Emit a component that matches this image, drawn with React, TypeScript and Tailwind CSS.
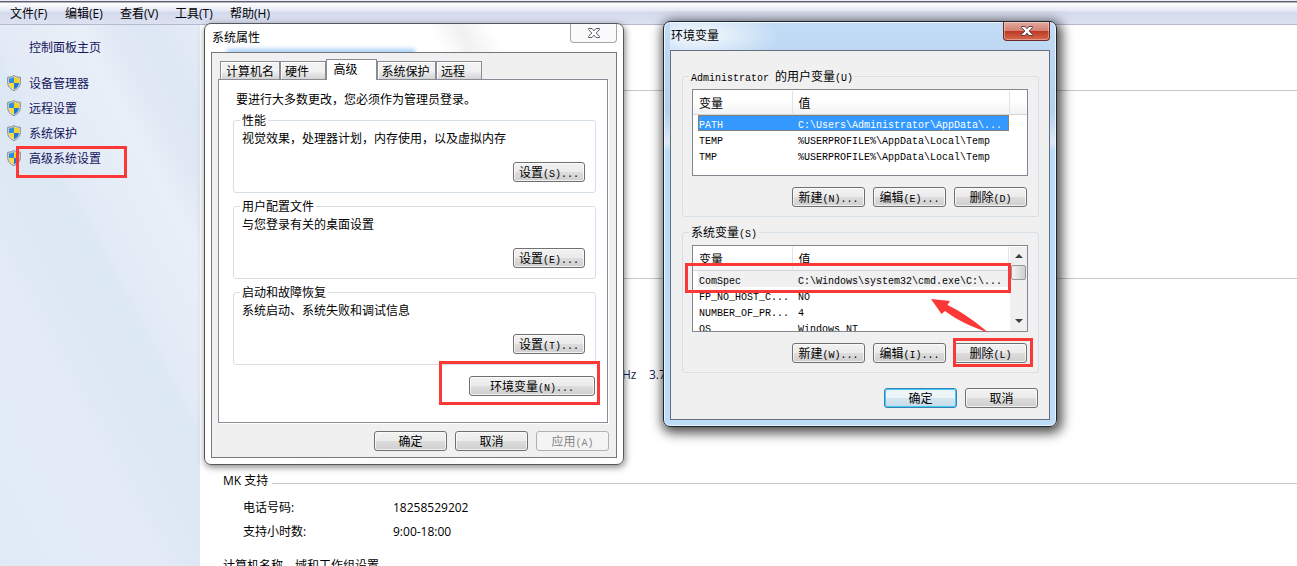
import type { ReactNode } from "react";
import clsx from "clsx";

const MENU_ITEMS = ["文件(F)", "编辑(E)", "查看(V)", "工具(T)", "帮助(H)"];

const SIDE_LINKS = ["设备管理器", "远程设置", "系统保护", "高级系统设置"];

const TABS = [
  { label: "计算机名", width: "w-[60px]" },
  { label: "硬件", width: "w-[46px]" },
  { label: "高级", width: "w-[51px]" },
  { label: "系统保护", width: "w-[59px]" },
  { label: "远程", width: "w-[46px]" },
];

const ADVANCED_GROUPS = [
  { title: "性能", text: "视觉效果，处理器计划，内存使用，以及虚拟内存", button: "设置(S)..." },
  { title: "用户配置文件", text: "与您登录有关的桌面设置", button: "设置(E)..." },
  { title: "启动和故障恢复", text: "系统启动、系统失败和调试信息", button: "设置(T)..." },
];

const USER_VARS = [
  { name: "PATH", value: "C:\\Users\\Administrator\\AppData\\..." },
  { name: "TEMP", value: "%USERPROFILE%\\AppData\\Local\\Temp" },
  { name: "TMP", value: "%USERPROFILE%\\AppData\\Local\\Temp" },
];

const SYSTEM_VARS = [
  { name: "ComSpec", value: "C:\\Windows\\system32\\cmd.exe\\C:\\..." },
  { name: "FP_NO_HOST_C...", value: "NO" },
  { name: "NUMBER_OF_PR...", value: "4" },
  { name: "OS", value: "Windows_NT" },
];

export default function App() {
  return (
    <div className="relative flex h-screen flex-col overflow-hidden bg-white font-['Open_Sans','Noto_Sans_CJK_SC',sans-serif] text-[12px] leading-[18px] text-black">
      <MenuBar />
      <div className="flex min-h-0 flex-1">
        <Sidebar />
        <SystemInfo />
      </div>
      <SystemPropertiesDialog />
      <EnvironmentDialog />
    </div>
  );
}

function MenuBar() {
  return (
    <nav className="flex h-[25px] shrink-0 items-center gap-[10px] border-b border-[#b4b9ce] bg-[linear-gradient(180deg,#eceaf3_0,#eceaf3_1px,#5f6274_1px,#5f6274_2px,#ffffff_3px,#e4e8f4_11px,#d4daed_12px,#dde2f2_100%)] pt-[3px] pl-[10px]">
      {MENU_ITEMS.map((item) => (
        <button key={item} className="w-[45px] text-left whitespace-nowrap">
          {item}
        </button>
      ))}
    </nav>
  );
}

function Sidebar() {
  return (
    <aside className="w-[200px] shrink-0 bg-[linear-gradient(62deg,#e0eaf6_0%,#e3ebf8_25%,#e3ebf7_33%,#dfe8f5_38%,#dde8f5_54%,#e4ebf6_59%,#e9eff8_75%,#e0e8f4_82%,#dde7f4_90%,#e5ecf6_100%)] pt-[14px] text-[#15155c]">
      <a href="#home" className="ml-[29px] block">
        控制面板主页
      </a>
      <ul className="mt-[18px] space-y-[7px]">
        {SIDE_LINKS.map((link) => (
          <li key={link} className="relative flex items-start pl-[7px]">
            <Shield />
            <a href="#settings" className="ml-2">
              {link}
            </a>
            {link === "高级系统设置" && (
              <Highlight className="-top-1 left-4 h-8 w-[111px]" />
            )}
          </li>
        ))}
      </ul>
    </aside>
  );
}

function SystemInfo() {
  return (
    <main className="min-w-0 flex-1 pl-[23px]">
      <div className="h-[66px] border-b border-[#c8c8c8]" />
      <div className="h-[188px] border-b border-[#c8c8c8]" />
      <p className="mt-[87px] ml-[399px] whitespace-pre text-[#1c1c50]">Hz    3.7</p>
      <div className="mt-[88px] flex items-center">
        <h2>MK 支持</h2>
        <hr className="mt-[5px] ml-1 flex-1 border-[#c8c8c8]" />
      </div>
      <dl className="mt-[9px] grid grid-cols-[150px_1fr] gap-y-[6px] pl-5">
        <dt>电话号码:</dt>
        <dd>18258529202</dd>
        <dt>支持小时数:</dt>
        <dd>9:00-18:00</dd>
      </dl>
      <h2 className="mt-4">计算机名称、域和工作组设置</h2>
    </main>
  );
}

function SystemPropertiesDialog() {
  return (
    <section
      aria-label="系统属性"
      className="absolute top-[23px] left-[204px] w-[420px] rounded-[7px] border border-[#55585c] bg-linear-to-r from-white via-[#fafafa] to-white px-[6px] pb-[6px] shadow-[1px_2px_7px_rgba(0,0,0,0.5)]"
    >
      <header className="relative flex h-7 items-start justify-between overflow-hidden bg-[linear-gradient(62deg,#fff_55%,#f1f1f1_62%,#fff_70%)]">
        <div className="absolute -bottom-[3px] left-4 h-[6px] w-[188px] bg-[#a4cef8] blur-[2px]" />
        <h1 className="relative mt-[5px] ml-[1px]">系统属性</h1>
        <button
          aria-label="关闭"
          className="flex h-[19px] w-[47px] items-center justify-center rounded-b-[4px] border border-t-0 border-[#a3a7ab] bg-[#fafafa]"
        >
          <CloseGlyph outline="#5b6070" />
        </button>
      </header>
      <div className="border border-[#75787c] bg-[#f0f0f0] p-[6px] pr-[7px] font-['Noto_Sans_CJK_SC',sans-serif] leading-4">
        <div role="tablist" className="flex h-5 items-end pl-[2px]">
          {TABS.map((tab) => (
            <Tab key={tab.label} label={tab.label} width={tab.width} active={tab.label === "高级"} />
          ))}
        </div>
        <div
          role="tabpanel"
          className="mr-px border border-[#898c95] bg-white pt-[11px] pr-[11px] pb-[26px] pl-[14px] shadow-[1px_1px_0_#fff]"
        >
          <p className="pl-[3px]">要进行大多数更改，您必须作为管理员登录。</p>
          <div className="mt-[5px] space-y-[5px]">
            {ADVANCED_GROUPS.map((group) => (
              <GroupBox key={group.title} title={group.title}>
                <p className="pt-[2px]">{group.text}</p>
                <div className="mt-4 mb-px flex justify-end">
                  <PushButton label={group.button} width="w-[72px]" />
                </div>
              </GroupBox>
            ))}
          </div>
          <div className="mt-[11px] flex justify-end pr-px">
            <div className="relative">
              <PushButton label="环境变量(N)..." width="w-[126px]" />
              <Highlight className="-top-[15px] -left-[30px] h-11 w-[161px]" />
            </div>
          </div>
        </div>
        <div className="mt-2 flex justify-end gap-2">
          <PushButton label="确定" />
          <PushButton label="取消" />
          <PushButton label="应用(A)" disabled />
        </div>
      </div>
    </section>
  );
}

function EnvironmentDialog() {
  return (
    <section
      aria-label="环境变量"
      className="absolute top-[21px] left-[663px] w-[394px] rounded-[7px] border border-[#1d2530] bg-[linear-gradient(180deg,#c3dcf6_0,#b4d1f0_90px,#dceafa_120px,#b9dcfb_130px,#bcdcfa_100%)] px-[6px] pb-[6px] shadow-[2px_3px_12px_3px_rgba(0,0,0,0.7),inset_0_0_0_1px_rgba(255,255,255,0.7)]"
    >
      <header className="flex h-7 items-start justify-between bg-[radial-gradient(80px_26px_at_30px_14px,rgba(255,255,255,0.85),transparent)]">
        <h1 className="mt-[5px] ml-[1px]">环境变量</h1>
        <button
          aria-label="关闭"
          className="flex h-[19px] w-[47px] items-center justify-center rounded-b-[4px] border border-t-0 border-[#6b2a24] bg-[linear-gradient(180deg,#e3aaa0_0%,#d58073_48%,#bb3a24_52%,#d8684f_100%)] shadow-[inset_0_0_0_1px_rgba(255,255,255,0.35)]"
        >
          <CloseGlyph outline="#5a4048" />
        </button>
      </header>
      <div className="border border-[#66707c] bg-[#f0f0f0] pt-[17px] pr-[10px] pb-[11px] pl-[11px] font-['Noto_Sans_CJK_SC',sans-serif] leading-4">
        <GroupBox title="Administrator 的用户变量(U)">
          <div className="mt-[5px] ml-px h-[87px] overflow-hidden border border-[#828790] bg-white pt-[1px]">
            <VariableTable rows={USER_VARS} spacer firstRow="bg-[#3399ff] border-dotted border-[#c86a14] text-white" />
          </div>
          <div className="mt-[11px] flex justify-end gap-2 pr-px">
            <PushButton label="新建(N)..." />
            <PushButton label="编辑(E)..." />
            <PushButton label="删除(D)" />
          </div>
        </GroupBox>
        <div className="mt-[7px]">
          <GroupBox title="系统变量(S)">
            <div className="relative mt-[5px] ml-px">
              <div className="flex h-[87px] overflow-hidden border border-[#828790] bg-white pt-[1px]">
                <div className="flex-1">
                  <VariableTable rows={SYSTEM_VARS} firstRow="bg-[#f0f0f0] border-[#f0f0f0]" />
                </div>
                <ScrollBar />
              </div>
              <Highlight className="top-[18px] -left-[7px] h-[30px] w-[326px]" />
              <svg viewBox="0 0 58 36" className="absolute top-[53px] right-[39px] h-9 w-[58px]" fill="#fb3835">
                <path d="M0 1L19 3L16.500 7C31 14 45 24 57 34.500C42 29 27 23 14 13L10.500 16Z" />
              </svg>
            </div>
            <div className="mt-[11px] flex justify-end gap-2 pr-px">
              <PushButton label="新建(W)..." />
              <PushButton label="编辑(I)..." />
              <div className="relative">
                <PushButton label="删除(L)" />
                <Highlight className="-top-[5px] -left-[1px] h-[29px] w-20" />
              </div>
            </div>
          </GroupBox>
        </div>
        <div className="mt-[15px] flex justify-end gap-2 pr-px">
          <PushButton label="确定" primary />
          <PushButton label="取消" />
        </div>
      </div>
    </section>
  );
}

// Latin runs are monospaced at half the width of a Chinese character
function Mixed({ text }: { text: string }) {
  return (
    <>
      {text.split(/([\x20-\x7e]+)/).map((part, i) =>
        i % 2 === 1 ? (
          <span key={i} className="font-['Liberation_Mono',monospace] text-[10px] leading-none whitespace-pre">
            {part}
          </span>
        ) : (
          part
        ),
      )}
    </>
  );
}

function Tab({ label, width, active }: { label: string; width: string; active: boolean }) {
  return (
    <button
      role="tab"
      aria-selected={active}
      className={clsx(
        "border border-b-0 border-[#898c95] whitespace-nowrap",
        width,
        active
          ? "relative -mb-px h-[21px] bg-white pr-3 pb-[2px]"
          : "h-[18px] bg-linear-to-b from-[#f2f2f2] from-50% to-[#d4d4d4] shadow-[inset_1px_1px_0_#fff]",
        (label === "硬件" || label === "远程") && "pr-3",
        label === "系统保护" && "pr-[2px]",
      )}
    >
      {label}
    </button>
  );
}

function GroupBox({ title, children }: { title: string; children: ReactNode }) {
  return (
    <fieldset className="min-w-0 rounded-[3px] border border-[#d5dfe5] pr-[10px] pb-[9px] pl-[8px]">
      <legend className="-ml-[2px] h-4 px-[2px] whitespace-nowrap">
        <Mixed text={title} />
      </legend>
      {children}
    </fieldset>
  );
}

function PushButton({
  label,
  width = "w-[73px]",
  primary,
  disabled,
}: {
  label: string;
  width?: string;
  primary?: boolean;
  disabled?: boolean;
}) {
  return (
    <button
      disabled={disabled}
      className={clsx(
        "flex h-5 items-center justify-center rounded-[3px] border pb-px whitespace-nowrap",
        width,
        disabled && "border-[#adb2b5] bg-[#f4f4f4] text-[#838383]",
        primary &&
          "border-[#3c7fb1] bg-[linear-gradient(180deg,#eef5f9_50%,#d6e6f0_50%,#c5dbe8_100%)] shadow-[inset_0_0_0_1px_#3fcdf5]",
        !disabled &&
          !primary &&
          "border-[#707070] bg-[linear-gradient(180deg,#f2f2f2_0%,#ebebeb_50%,#dddddd_50%,#cfcfcf_100%)] shadow-[inset_0_0_0_1px_rgba(255,255,255,0.7)]",
      )}
    >
      <span>
        <Mixed text={label} />
      </span>
    </button>
  );
}

function VariableTable({
  rows,
  firstRow,
  spacer,
}: {
  rows: { name: string; value: string }[];
  firstRow: string;
  spacer?: boolean;
}) {
  return (
    <table className="w-full table-fixed border-collapse text-left">
      <thead>
        <tr className="h-6 bg-linear-to-b from-white from-40% to-[#f1f2f4] shadow-[inset_0_-1px_0_#d5d5d5]">
          <th className="w-[99px] border-r border-[#e0e3e8] pl-[6px] font-normal">变量</th>
          <th className="border-r border-[#e0e3e8] pl-[6px] font-normal">值</th>
          {spacer && <th className="w-[18px]" />}
        </tr>
      </thead>
      <tbody>
        {rows.map((row, i) => (
          <tr key={row.name}>
            <td className="p-0 pl-[5px]">
              <div className={clsx("h-4 border-y border-l leading-[13px]", i === 0 ? firstRow : "border-transparent")}>
                <Mixed text={row.name} />
              </div>
            </td>
            <td className="p-0">
              <div
                className={clsx("h-4 border-y border-r pl-[6px] leading-[13px]", i === 0 ? firstRow : "border-transparent")}
              >
                <Mixed text={row.value} />
              </div>
            </td>
          </tr>
        ))}
      </tbody>
    </table>
  );
}

function ScrollBar() {
  return (
    <div className="ml-px flex w-[17px] flex-col items-center bg-[#f0f0f0]">
      <svg viewBox="0 0 8 4" className="mt-[7px] h-1 w-2" fill="#404040">
        <path d="M4 0L8 4H0Z" />
      </svg>
      <div className="mt-[7px] h-[15px] w-[15px] rounded-[2px] border border-[#979797] bg-linear-to-r from-[#f4f4f4] to-[#cfcfcf]" />
      <svg viewBox="0 0 8 4" className="mt-auto mb-2 h-1 w-2" fill="#404040">
        <path d="M4 4L8 0H0Z" />
      </svg>
    </div>
  );
}

function Highlight({ className }: { className: string }) {
  return <div className={clsx("pointer-events-none absolute border-3 border-[#fb3835]", className)} />;
}

function CloseGlyph({ outline }: { outline: string }) {
  return (
    <svg viewBox="0 0 12 10" className="h-[10px] w-3" fill="#fff" stroke={outline} strokeWidth="1">
      <path d="M0.500 0.500H4L6 2.800L8 0.500H11.500V1.500L8.200 5L11.500 8.500V9.500H8L6 7.200L4 9.500H0.500V8.500L3.800 5L0.500 1.500Z" />
    </svg>
  );
}

function Shield() {
  return (
    <svg viewBox="0 0 14 16" className="h-4 w-[14px] shrink-0">
      <path d="M7 0.500C5.500 1.700 3.200 2.300 0.700 2.200V7.500C0.700 11.500 3.300 14.300 7 15.600C10.700 14.300 13.300 11.500 13.300 7.500V2.200C10.800 2.300 8.500 1.700 7 0.500Z" fill="#d3d7d6" stroke="#858b8b" />
      <path d="M7 2C5.700 2.900 4.200 3.400 2 3.500V8H7Z" fill="#2b8fe4" />
      <path d="M7 2C8.300 2.900 9.800 3.400 12 3.500V8H7Z" fill="#f7d21e" />
      <path d="M2 8C2.200 11 4.200 13.300 7 14.300V8Z" fill="#fbdc3c" />
      <path d="M12 8C11.800 11 9.800 13.300 7 14.300V8Z" fill="#1f78d6" />
    </svg>
  );
}
